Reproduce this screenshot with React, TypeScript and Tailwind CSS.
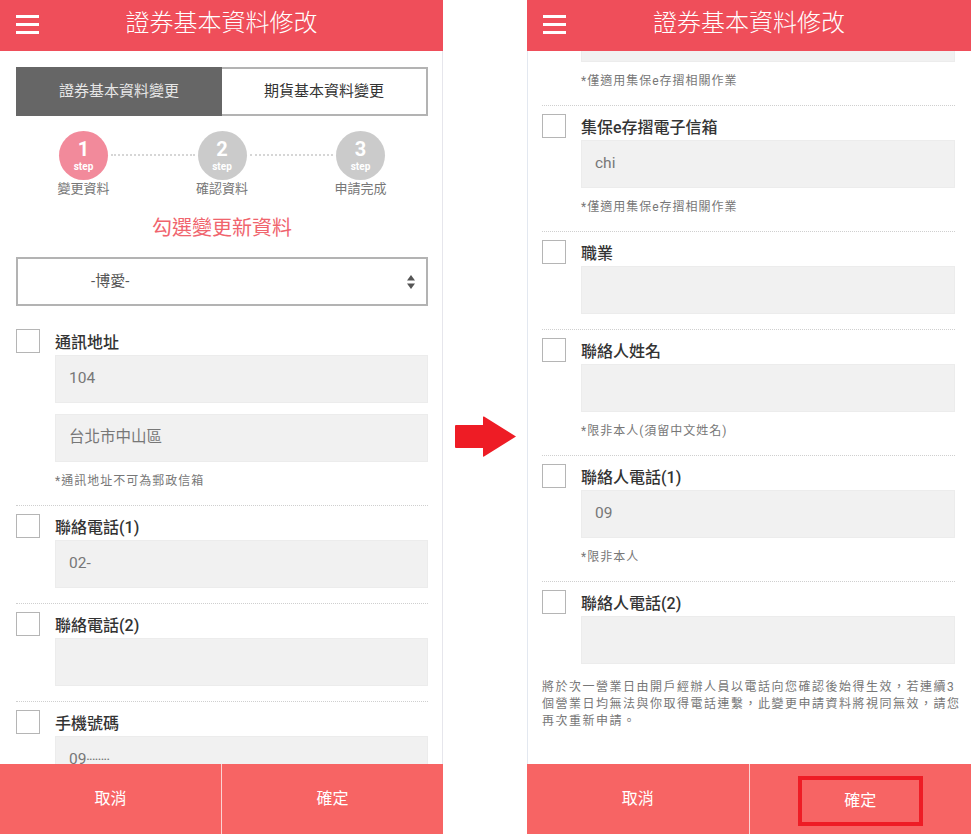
import type { ReactNode } from 'react';

// 表單欄位資料
type Field = { label: string; values: string[]; note?: string };

const leftFields: Field[] = [
  { label: '通訊地址', values: ['104', '台北市中山區'], note: '*通訊地址不可為郵政信箱' },
  { label: '聯絡電話(1)', values: ['02-'] },
  { label: '聯絡電話(2)', values: [''] },
  { label: '手機號碼', values: ['09‧‧‧‧‧‧‧‧'] },
];

const rightFields: Field[] = [
  { label: '集保e存摺電子信箱', values: ['chi'], note: '*僅適用集保e存摺相關作業' },
  { label: '職業', values: [''] },
  { label: '聯絡人姓名', values: [''], note: '*限非本人(須留中文姓名)' },
  { label: '聯絡人電話(1)', values: ['09'], note: '*限非本人' },
  { label: '聯絡人電話(2)', values: [''] },
];

const steps = [
  { no: 1, label: '變更資料', active: true },
  { no: 2, label: '確認資料', active: false },
  { no: 3, label: '申請完成', active: false },
];

const Header = () => (
  <header className="grid h-[51px] shrink-0 grid-cols-[1fr_auto_1fr] items-center bg-[#ef4e5a]">
    <div className="flex w-[23px] flex-col gap-[5px] ml-4 -mt-[3px]">
      <span className="h-[3px] bg-white" />
      <span className="h-[3px] bg-white" />
      <span className="h-[3px] bg-white" />
    </div>
    <h1 className="pb-[5px] text-[24px] leading-8 font-light text-white">證券基本資料修改</h1>
    <div />
  </header>
);

const Footer = ({ highlight }: { highlight?: boolean }) => (
  <footer className="flex h-[70px] shrink-0 bg-[#f76464] text-[16px] text-white">
    <button className="flex flex-1 items-center justify-center">取消</button>
    <div className="w-px bg-[#fbd3d3]" />
    <button className="flex flex-1 items-center justify-center">
      {highlight ? (
        <span className="mt-[3px] flex h-[50px] w-[125px] items-center justify-center border-4 border-[#ee1c25]">確定</span>
      ) : (
        '確定'
      )}
    </button>
  </footer>
);

const FieldBlock = ({ field, last }: { field: Field; last?: boolean }) => (
  <div className={`pt-2 ${last ? '' : 'border-b border-dotted border-[#cfcfcf] pb-[15px]'}`}>
    <div className="flex gap-[15px]">
      <div className="h-6 w-6 shrink-0 border-[1.5px] border-[#b5b5b5] bg-white" />
      <div className="min-w-0 flex-1">
        <div className="h-[26px] text-[16px] leading-[27px] font-medium text-[#333]">{field.label}</div>
        <div className="flex flex-col gap-[11px]">
          {field.values.map((v, i) => (
            <div key={i} className="flex h-12 items-center border border-[#ececec] bg-[#f1f1f1] px-[13px] text-[15.5px] text-[#777]">
              {v}
            </div>
          ))}
        </div>
        {field.note && (
          <p className="mt-[10px] text-[12px] leading-[18px] tracking-[1px] text-[#777]">{field.note}</p>
        )}
      </div>
    </div>
  </div>
);

const Phone = ({ children, contentClass, highlight }: { children: ReactNode; contentClass: string; highlight?: boolean }) => (
  <div className="flex h-[834px] shrink-0 flex-col overflow-hidden bg-white">
    <Header />
    <div className={`flex-1 overflow-hidden ${contentClass}`}>{children}</div>
    <Footer highlight={highlight} />
  </div>
);

const StepCircle = ({ no, label, active }: { no: number; label: string; active: boolean }) => (
  <div className="flex w-[49px] shrink-0 flex-col items-center">
    <div className={`flex h-[49px] w-[49px] flex-col items-center justify-center rounded-full text-white ${active ? 'bg-[#f28a9b]' : 'bg-[#cbcbcb]'}`}>
      <span className="text-[20px] leading-[19px] font-bold">{no}</span>
      <span className="mt-[2px] text-[10px] leading-[11px] font-bold">step</span>
    </div>
    <span className="whitespace-nowrap text-[13px] leading-[18px] text-[#777]">{label}</span>
  </div>
);

const LeftScreen = () => (
  <Phone contentClass="w-[443px] border-r border-[#e6e6ec] pl-4 pr-[14px] pt-4">
    <div className="grid h-[49px] grid-cols-2 text-[15px]">
      <div className="flex items-center justify-center bg-[#666] text-[#e6e6e6]">證券基本資料變更</div>
      <div className="flex items-center justify-center border-2 border-l-0 border-[#b3b3b3] text-[#333]">期貨基本資料變更</div>
    </div>

    <div className="mt-[15px] flex items-start px-[43px]">
      <StepCircle {...steps[0]} />
      <div className="mx-[3px] mt-[23px] flex-1 border-t-2 border-dotted border-[#d6d6d6]" />
      <StepCircle {...steps[1]} />
      <div className="mx-[3px] mt-[23px] flex-1 border-t-2 border-dotted border-[#d6d6d6]" />
      <StepCircle {...steps[2]} />
    </div>

    <h2 className="mt-4 text-center text-[20px] leading-7 text-[#f0646d]">勾選變更新資料</h2>

    <div className="mt-[15px] mb-[15px] flex h-[49px] items-center justify-between border-2 border-[#b3b3b3] pl-[73px] pr-[11px] text-[15px] text-[#555]">
      <span>-博愛-</span>
      <svg width="8" height="14" viewBox="0 0 8 14" fill="#555">
        <path d="M4 0 L8 5.5 H0 Z" />
        <path d="M0 8.5 H8 L4 14 Z" />
      </svg>
    </div>

    {leftFields.map(f => (
      <FieldBlock key={f.label} field={f} />
    ))}
  </Phone>
);

const RightScreen = () => (
  <Phone contentClass="w-[444px] border-l border-[#e3e8f0] pl-[14px] pr-4" highlight>
    <div className="border-b border-dotted border-[#cfcfcf] pb-[15px] pl-[39px]">
      <div className="h-[11px] border border-t-0 border-[#ececec] bg-[#f1f1f1]" />
      <p className="mt-[10px] text-[12px] leading-[18px] tracking-[1px] text-[#777]">*僅適用集保e存摺相關作業</p>
    </div>

    {rightFields.map((f, i) => (
      <FieldBlock key={f.label} field={f} last={i === rightFields.length - 1} />
    ))}

    <p className="mt-[15px] whitespace-nowrap text-[12px] leading-[17px] tracking-[1.5px] text-[#777]">
      將於次一營業日由開戶經辦人員以電話向您確認後始得生效，若連續3
      <br />
      個營業日均無法與你取得電話連繫，此變更申請資料將視同無效，請您
      <br />
      再次重新申請。
    </p>
  </Phone>
);

const Arrow = () => (
  <div className="flex flex-1 items-center justify-center pt-[38px] pl-[2px]">
    <svg width="62" height="41" viewBox="0 0 62 41" fill="#ee1c25">
      <path d="M1 9 H28 V1 Q28 0 29 0.6 L61 20.5 L29 40.4 Q28 41 28 40 V32 H1 Q0 32 0 31 V10 Q0 9 1 9 Z" />
    </svg>
  </div>
);

export default function App() {
  return (
    <div className="flex h-[834px] w-[971px] bg-white font-[Roboto,'Noto_Sans_CJK_TC',sans-serif]">
      <LeftScreen />
      <Arrow />
      <RightScreen />
    </div>
  );
}
